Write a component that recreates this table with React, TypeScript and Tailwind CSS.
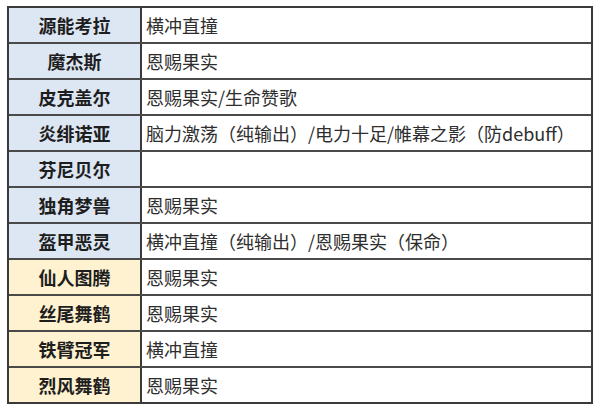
import React from 'react';

type Row = { name: string; skill: string; tone: 'blue' | 'yellow' };

const rows: Row[] = [
  { name: '源能考拉', skill: '横冲直撞', tone: 'blue' },
  { name: '魔杰斯', skill: '恩赐果实', tone: 'blue' },
  { name: '皮克盖尔', skill: '恩赐果实/生命赞歌', tone: 'blue' },
  { name: '炎绯诺亚', skill: '脑力激荡（纯输出）/电力十足/帷幕之影（防debuff）', tone: 'blue' },
  { name: '芬尼贝尔', skill: '', tone: 'blue' },
  { name: '独角梦兽', skill: '恩赐果实', tone: 'blue' },
  { name: '盔甲恶灵', skill: '横冲直撞（纯输出）/恩赐果实（保命）', tone: 'blue' },
  { name: '仙人图腾', skill: '恩赐果实', tone: 'yellow' },
  { name: '丝尾舞鹤', skill: '恩赐果实', tone: 'yellow' },
  { name: '铁臂冠军', skill: '横冲直撞', tone: 'yellow' },
  { name: '烈风舞鹤', skill: '恩赐果实', tone: 'yellow' },
];

export default function App() {
  return (
    <div
      className="w-[600px] h-[413px] bg-white pt-[6px] pl-[7px]"
      style={{ fontFamily: '"Noto Sans CJK SC", "Noto Sans", sans-serif' }}
    >
      <div className="w-[586px] border-2 border-[#3a3a3a] flex flex-col">
        {rows.map((r, i) => (
          <div
            key={r.name}
            className={`flex h-[34px] ${i > 0 ? 'border-t-2 border-[#4a4a4a] h-[36px]' : ''}`}
          >
            <div
              className={`w-[133px] shrink-0 border-r-2 border-[#3a3a3a] flex items-center justify-center text-[18px] font-bold text-[#1e1e1e] ${
                r.tone === 'blue' ? 'bg-[#dde6f3]' : 'bg-[#fff2d0]'
              }`}
            >
              {r.name}
            </div>
            <div className="flex-1 flex items-center pl-[4px] text-[18px] text-[#2e2e2e] whitespace-nowrap">
              {r.skill}
            </div>
          </div>
        ))}
      </div>
    </div>
  );
}
